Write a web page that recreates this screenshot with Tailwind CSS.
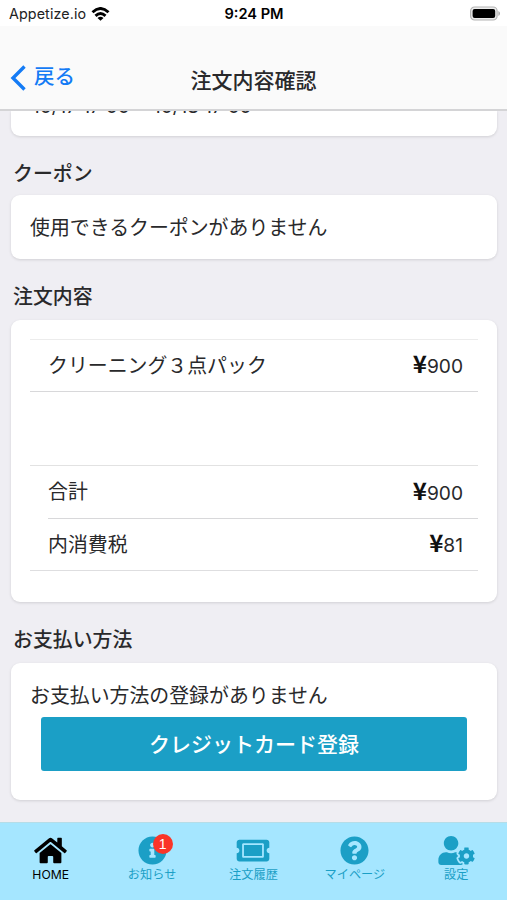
<!DOCTYPE html>
<html lang="ja">
<head>
<meta charset="utf-8">
<title>注文内容確認</title>
<script src="https://cdn.jsdelivr.net/npm/@tailwindcss/browser@4"></script>
</head>
<body class="w-[507px] h-[900px] overflow-hidden flex flex-col bg-[#efeef3] text-[#29292b] font-['Inter','Noto_Sans_CJK_JP',sans-serif] text-[19.9px] leading-[28px]">
  <header class="relative z-10 shrink-0 h-[111px] bg-[#fafafa] border-b-2 border-[#d4d4d6] flex flex-col">
    <div class="h-[26px] shrink-0 bg-white grid grid-cols-3 items-center pl-[9px] pr-[7px] text-black text-[14px] leading-[26px]">
      <div class="flex items-center gap-[5px]">
        <span class="font-['Inter'] text-[14.3px] text-[#222] tracking-[0.1px] pt-[1px]">Appetize.io</span>
        <svg class="w-[19px] h-[14px]" viewBox="0 0 18 14" fill="none" stroke="#000" stroke-width="2.9"><path d="M1 5.2Q9-2.2 17 5.2M4 8.9Q9 4.2 14 8.9"/><path d="M9 13.8L6 10.9Q9 8.6 12 10.9Z" fill="#000" stroke="none"/></svg>
      </div>
      <div class="text-center font-semibold text-[14.6px] pt-[1px] pr-[1px] whitespace-nowrap">9:24 PM</div>
      <svg class="justify-self-end w-[31px] h-[15px]" viewBox="0 0 31 15"><rect x="1.6" y="1" width="26.5" height="13" rx="4" fill="#ededed" stroke="#b4b4b4" stroke-width="1.2"/><rect x="3.6" y="3" width="22.6" height="9" rx="2" fill="#000"/><path d="M29.4 5q1.6 .8 1.6 2.5t-1.6 2.5z" fill="#aaa"/></svg>
    </div>
    <div class="flex-1 grid grid-cols-3 items-center pt-[22px] px-[10px]">
      <a class="flex items-center gap-[8px] text-[#147bf5] text-[20.5px] font-medium mb-[2px]">
        <svg class="w-[16px] h-[26px]" viewBox="0 0 16 26" fill="none" stroke="#147bf5" stroke-width="3.4"><path d="M14.5 1.5L3 13L14.5 24.5"/></svg><span class="-mt-[2px]">戻る</span>
      </a>
      <h1 class="text-center whitespace-nowrap text-[21px] font-medium mt-[5px]">注文内容確認</h1>
    </div>
  </header>

  <main class="flex-1 min-h-0 pl-[11px] pr-[10px]">
    <section class="flow-root h-[25px] bg-white rounded-b-[9px] shadow-[0_1px_3px_rgba(0,0,0,0.13)] pl-[21px]">
      <p class="-mt-[18px] whitespace-pre text-[19px]">10/17 17:00 ~ 10/18 17:00</p>
    </section>
    <h2 class="h-[59px] pt-[24px] pl-[2px] font-medium">クーポン</h2>
    <section class="h-[64px] bg-white rounded-[9px] shadow-[0_1px_3px_rgba(0,0,0,0.13)] flex items-center pl-[19px] pt-[1px]">使用できるクーポンがありません</section>
    <h2 class="h-[61px] pt-[24px] pl-[2px] font-medium">注文内容</h2>
    <section class="h-[282px] bg-white rounded-[9px] shadow-[0_1px_3px_rgba(0,0,0,0.13)] px-[19px] pt-[19px]">
      <div class="h-[53px] border-t border-b border-t-[#ececec] border-b-[#d8d8da] flex items-center justify-between pl-[18px] pr-[15px]"><span>クリーニング３点パック</span><span class="text-[19.2px] -mt-[2px]"><b class="text-[#111] font-bold font-['Noto_Sans_CJK_JP'] text-[24px] leading-[28px]">¥</b>900</span></div>
      <div class="mt-[73px] border-t border-b border-t-[#e2e2e2] border-b-[#dedee0] pl-[18px]">
        <div class="h-[53px] border-b border-[#d8d8da] flex items-center justify-between pr-[15px]"><span>合計</span><span class="text-[19.2px] -mt-[2px]"><b class="text-[#111] font-bold font-['Noto_Sans_CJK_JP'] text-[24px] leading-[28px]">¥</b>900</span></div>
        <div class="h-[51px] flex items-center justify-between pr-[15px]"><span>内消費税</span><span class="text-[19.2px] -mt-[2px]"><b class="text-[#111] font-bold font-['Noto_Sans_CJK_JP'] text-[24px] leading-[28px]">¥</b>81</span></div>
      </div>
    </section>
    <h2 class="h-[61px] pt-[24px] pl-[2px] font-medium">お支払い方法</h2>
    <section class="h-[137px] bg-white rounded-[9px] shadow-[0_1px_3px_rgba(0,0,0,0.13)] px-[19px] pt-[19px]">
      <p>お支払い方法の登録がありません</p>
      <button class="mt-[7px] mx-[11px] w-[426px] h-[54px] block rounded-[3px] bg-[#1b9fc6] text-white text-[21px] font-medium pt-[1px]">クレジットカード登録</button>
    </section>
  </main>

  <nav class="shrink-0 h-[78px] bg-[#a5e6ff] border-t border-[#b5dde8] grid grid-cols-5 text-[#1b9fc6] text-[12.2px] leading-[16px] pt-[13px]">
    <div class="flex flex-col items-center gap-[2px] text-black">
      <svg class="w-[33px] h-[29px]" viewBox="0 0 576 512" fill="currentColor"><path d="M280.37 148.26L96 300.11V464a16 16 0 0 0 16 16l112.06-.29a16 16 0 0 0 15.92-16V368a16 16 0 0 1 16-16h64a16 16 0 0 1 16 16v95.64a16 16 0 0 0 16 16.05L464 480a16 16 0 0 0 16-16V300L295.67 148.26a12.19 12.19 0 0 0-15.3 0zM571.6 251.47L488 182.56V44.05a12 12 0 0 0-12-12h-56a12 12 0 0 0-12 12v72.61L318.47 43a48 48 0 0 0-61 0L4.34 251.47a12 12 0 0 0-1.6 16.9l25.5 31A12 12 0 0 0 45.15 301l235.22-193.74a12.19 12.19 0 0 1 15.3 0L530.9 301a12 12 0 0 0 16.9-1.6l25.5-31a12 12 0 0 0-1.7-16.93z"/></svg>
      <span>HOME</span>
    </div>
    <div class="flex flex-col items-center gap-[2px]">
      <div class="relative h-[29px]">
        <svg class="w-[29px] h-[29px]" viewBox="0 0 512 512" fill="currentColor"><path d="M256 8C119.043 8 8 119.083 8 256c0 136.997 111.043 248 248 248s248-111.003 248-248C504 119.083 392.957 8 256 8zm0 110c23.196 0 42 18.804 42 42s-18.804 42-42 42-42-18.804-42-42 18.804-42 42-42zm56 254c0 6.627-5.373 12-12 12h-88c-6.627 0-12-5.373-12-12v-24c0-6.627 5.373-12 12-12h12v-64h-12c-6.627 0-12-5.373-12-12v-24c0-6.627 5.373-12 12-12h64c6.627 0 12 5.373 12 12v100h12c6.627 0 12 5.373 12 12v24z"/></svg>
        <span class="absolute left-[15px] -top-[2px] w-[20px] h-[20px] rounded-full bg-[#fa3528] text-white text-[14px] leading-[20px] text-center font-['Liberation_Sans']">1</span>
      </div>
      <span>お知らせ</span>
    </div>
    <div class="flex flex-col items-center gap-[2px]">
      <svg class="w-[34px] h-[29px]" viewBox="0 0 576 512" fill="currentColor"><path d="M128 160h320v192H128V160zm400 96c0 26.51 21.49 48 48 48v96c0 26.51-21.49 48-48 48H48c-26.51 0-48-21.49-48-48v-96c26.51 0 48-21.49 48-48s-21.49-48-48-48v-96c0-26.51 21.49-48 48-48h480c26.51 0 48 21.49 48 48v96c-26.51 0-48 21.49-48 48zm-48-104c0-13.255-10.745-24-24-24H120c-13.255 0-24 10.745-24 24v208c0 13.255 10.745 24 24 24h336c13.255 0 24-10.745 24-24V152z"/></svg>
      <span>注文履歴</span>
    </div>
    <div class="flex flex-col items-center gap-[2px]">
      <svg class="w-[29px] h-[29px]" viewBox="0 0 512 512" fill="currentColor"><path d="M504 256c0 136.997-111.043 248-248 248S8 392.997 8 256C8 119.083 119.043 8 256 8s248 111.083 248 248zM262.655 90c-54.497 0-89.255 22.957-116.549 63.758-3.536 5.286-2.353 12.415 2.715 16.258l34.699 26.31c5.205 3.947 12.621 3.008 16.665-2.122 17.864-22.658 30.113-35.797 57.303-35.797 20.429 0 45.698 13.148 45.698 32.958 0 14.976-12.363 22.667-32.534 33.976C247.128 238.528 216 254.941 216 296v4c0 6.627 5.373 12 12 12h56c6.627 0 12-5.373 12-12v-1.333c0-28.462 83.186-29.647 83.186-106.667 0-58.002-60.165-102-116.531-102zM256 338c-25.365 0-46 20.635-46 46 0 25.364 20.635 46 46 46s46-20.636 46-46c0-25.365-20.635-46-46-46z"/></svg>
      <span>マイページ</span>
    </div>
    <div class="flex flex-col items-center gap-[2px]">
      <svg class="w-[37px] h-[29px]" viewBox="0 0 640 512" fill="currentColor"><path d="M610.5 373.3c2.6-14.1 2.6-28.5 0-42.6l25.8-14.9c3-1.7 4.3-5.2 3.3-8.5-6.7-21.6-18.2-41.2-33.2-57.4-2.3-2.5-6-3.1-9-1.4l-25.8 14.9c-10.9-9.3-23.4-16.5-36.9-21.3v-29.8c0-3.4-2.4-6.4-5.7-7.1-22.3-5-45-4.8-66.2 0-3.3.7-5.7 3.7-5.7 7.1v29.8c-13.5 4.8-26 12-36.9 21.3l-25.8-14.9c-2.9-1.7-6.7-1.1-9 1.4-15 16.2-26.5 35.8-33.2 57.4-1 3.3.4 6.8 3.3 8.5l25.8 14.9c-2.6 14.1-2.6 28.5 0 42.6l-25.8 14.9c-3 1.7-4.3 5.2-3.3 8.5 6.7 21.6 18.2 41.1 33.2 57.4 2.3 2.5 6 3.1 9 1.4l25.8-14.9c10.9 9.3 23.4 16.5 36.9 21.3v29.8c0 3.4 2.4 6.4 5.7 7.1 22.3 5 45 4.8 66.2 0 3.3-.7 5.7-3.7 5.7-7.1v-29.8c13.5-4.8 26-12 36.9-21.3l25.8 14.9c2.9 1.7 6.7 1.1 9-1.4 15-16.2 26.5-35.8 33.2-57.4 1-3.3-.4-6.8-3.3-8.5l-25.8-14.9zM496 400.5c-26.8 0-48.5-21.8-48.5-48.5s21.8-48.5 48.5-48.5 48.5 21.8 48.5 48.5-21.7 48.5-48.5 48.5zM224 256c70.7 0 128-57.3 128-128S294.7 0 224 0 96 57.3 96 128s57.3 128 128 128zm201.2 226.5c-2.3-1.2-4.6-2.6-6.8-3.9l-7.9 4.6c-6 3.4-12.8 5.3-19.6 5.3-10.9 0-21.4-4.6-28.9-12.6-18.3-19.8-32.3-43.9-40.2-69.6-5.5-17.7 1.9-36.4 17.9-45.7l7.9-4.6c-.1-2.6-.1-5.2 0-7.8l-7.9-4.6c-16-9.2-23.4-28-17.9-45.7.9-2.9 2.2-5.8 3.2-8.7-3.8-.3-7.5-1.2-11.4-1.2h-16.7c-22.2 10.2-46.9 16-72.9 16s-50.6-5.8-72.9-16h-16.7C60.2 288 0 348.2 0 422.4V464c0 26.5 21.5 48 48 48h352c10.1 0 19.5-3.2 27.2-8.5-1.2-3.8-2-7.7-2-11.8v-9.2z"/></svg>
      <span>設定</span>
    </div>
  </nav>
</body>
</html>
